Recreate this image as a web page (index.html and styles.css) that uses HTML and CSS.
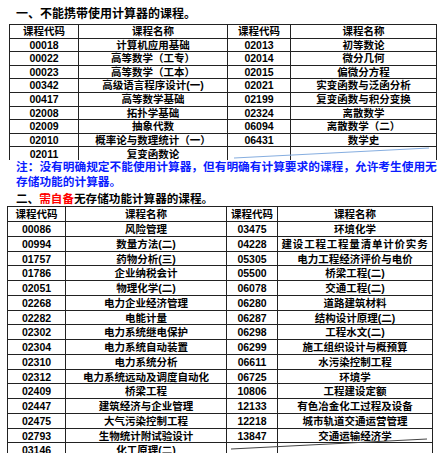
FILE: index.html
```html
<!DOCTYPE html>
<html lang="zh">
<head>
<meta charset="utf-8">
<link rel="stylesheet" href="styles.css">
</head>
<body>
<div class="page">
  <h2 class="heading h1">一、不能携带使用计算器的课程。</h2>
  <div class="tbl-wrap t1-wrap">
    <table class="tbl t1">
      <colgroup><col class="c1"><col class="c2"><col class="c3"><col class="c4"></colgroup>
      <tr><th>课程代码</th><th>课程名称</th><th>课程代码</th><th>课程名称</th></tr>
      <tr><td class="code">00018</td><td>计算机应用基础</td><td class="code">02013</td><td>初等数论</td></tr>
      <tr><td class="code">00022</td><td>高等数学（工专）</td><td class="code">02014</td><td>微分几何</td></tr>
      <tr><td class="code">00023</td><td>高等数学（工本）</td><td class="code">02015</td><td>偏微分方程</td></tr>
      <tr><td class="code">00342</td><td>高级语言程序设计(一)</td><td class="code">02021</td><td>实变函数与泛函分析</td></tr>
      <tr><td class="code">00417</td><td>高等数学基础</td><td class="code">02199</td><td>复变函数与积分变换</td></tr>
      <tr><td class="code">02008</td><td>拓扑学基础</td><td class="code">02324</td><td>离散数学</td></tr>
      <tr><td class="code">02009</td><td>抽象代数</td><td class="code">06094</td><td>离散数学（二）</td></tr>
      <tr><td class="code">02010</td><td>概率论与数理统计（一）</td><td class="code">06431</td><td>数学史</td></tr>
      <tr class="last"><td class="code">02011</td><td>复变函数论</td><td></td><td></td></tr>
    </table>
    <svg class="slash slash1" width="448" height="20" viewBox="0 0 448 20"><line x1="234" y1="14" x2="429" y2="4" stroke="#86aee0" stroke-width="1"/></svg>
  </div>
  <p class="note">注：没有明确规定不能使用计算器，但有明确有计算要求的课程，允许考生使用无存储功能的计算器。</p>
  <h2 class="heading h2">二、<span class="red">需自备</span>无存储功能计算器的课程。</h2>
  <div class="tbl-wrap t2-wrap">
    <table class="tbl t2">
      <colgroup><col class="c1"><col class="c2"><col class="c3"><col class="c4"></colgroup>
      <tr><th>课程代码</th><th>课程名称</th><th>课程代码</th><th>课程名称</th></tr>
      <tr><td class="code">00086</td><td>风险管理</td><td class="code">03475</td><td>环境化学</td></tr>
      <tr><td class="code">00994</td><td>数量方法(二)</td><td class="code">04228</td><td class="wide">建设工程工程量清单计价实务</td></tr>
      <tr><td class="code">01757</td><td>药物分析(三)</td><td class="code">05305</td><td>电力工程经济评价与电价</td></tr>
      <tr><td class="code">01786</td><td>企业纳税会计</td><td class="code">05500</td><td>桥梁工程(二)</td></tr>
      <tr><td class="code">02051</td><td>物理化学(二)</td><td class="code">06078</td><td>交通工程(二)</td></tr>
      <tr><td class="code">02268</td><td>电力企业经济管理</td><td class="code">06280</td><td>道路建筑材料</td></tr>
      <tr><td class="code">02282</td><td>电能计量</td><td class="code">06287</td><td>结构设计原理(二)</td></tr>
      <tr><td class="code">02302</td><td>电力系统继电保护</td><td class="code">06298</td><td>工程水文(二)</td></tr>
      <tr><td class="code">02304</td><td>电力系统自动装置</td><td class="code">06299</td><td>施工组织设计与概预算</td></tr>
      <tr><td class="code">02310</td><td>电力系统分析</td><td class="code">06611</td><td>水污染控制工程</td></tr>
      <tr><td class="code">02312</td><td>电力系统远动及调度自动化</td><td class="code">06725</td><td>环境学</td></tr>
      <tr><td class="code">02409</td><td>桥梁工程</td><td class="code">10806</td><td>工程建设定额</td></tr>
      <tr><td class="code">02447</td><td>建筑经济与企业管理</td><td class="code">12133</td><td>有色冶金化工过程及设备</td></tr>
      <tr><td class="code">02475</td><td>大气污染控制工程</td><td class="code">12218</td><td>城市轨道交通运营管理</td></tr>
      <tr><td class="code">02793</td><td>生物统计附试验设计</td><td class="code">13847</td><td>交通运输经济学</td></tr>
      <tr><td class="code">03146</td><td>化工原理(二)</td><td></td><td></td></tr>
    </table>
    <svg class="slash slash2" width="448" height="20" viewBox="0 0 448 20"><line x1="231" y1="14" x2="427" y2="4" stroke="#444" stroke-width="1"/></svg>
  </div>
</div>
</body>
</html>
```

FILE: styles.css
```css
html, body {
  margin: 0;
  padding: 0;
  background: #fff;
}

.page {
  width: 448px;
  height: 453px;
  overflow: hidden;
  font-family: "Liberation Sans", "Noto Sans CJK SC", sans-serif;
  color: #000;
}

.heading {
  margin: 0;
  padding-left: 16px;
  font-size: 12px;
  font-weight: 700;
  line-height: 15px;
}

.h1 {
  padding-top: 7px;
  height: 17px;
}

.h2 {
  margin-top: 1px;
  height: 15px;
  font-size: 11.6px;
}

.red {
  color: #ff0000;
}

.note {
  margin: 0;
  padding-left: 16px;
  width: 424px;
  font-size: 11.7px;
  line-height: 15px;
  font-weight: 700;
  color: #0a1cff;
  position: relative;
  top: -1px;
  height: 30px;
}

.tbl-wrap {
  position: relative;
}

.tbl {
  border-collapse: collapse;
  table-layout: fixed;
  font-size: 10.5px;
  font-weight: 700;
}

.tbl th,
.tbl td {
  border: 1px solid #222;
  padding: 0;
  text-align: center;
  vertical-align: middle;
  line-height: 1;
  white-space: nowrap;
  overflow: hidden;
}

.tbl th {
  font-weight: 700;
}

.t1 {
  margin-left: 9px;
  width: 427px;
}

.t1 tr {
  height: 13.6px;
}

.t1 .c1 { width: 69px; }
.t1 .c2 { width: 149px; }
.t1 .c3 { width: 63px; }
.t1 .c4 { width: 146px; }

.t1 .last td {
  border-bottom: none;
}

.t2 {
  margin-left: 7px;
  width: 425px;
}

.t2 tr {
  height: 15px;
}

.t2 tr:nth-child(4n) {
  height: 14px;
}

.t2 .c1 { width: 58px; }
.t2 .c2 { width: 161px; }
.t2 .c3 { width: 51px; }
.t2 .c4 { width: 155px; }

.wide {
  letter-spacing: 0.8px;
}

.code {
  font-size: 10.5px;
}

.slash {
  position: absolute;
  left: 0;
  pointer-events: none;
}

.slash1 {
  top: 120px;
}

.slash2 {
  top: 229px;
}
```
